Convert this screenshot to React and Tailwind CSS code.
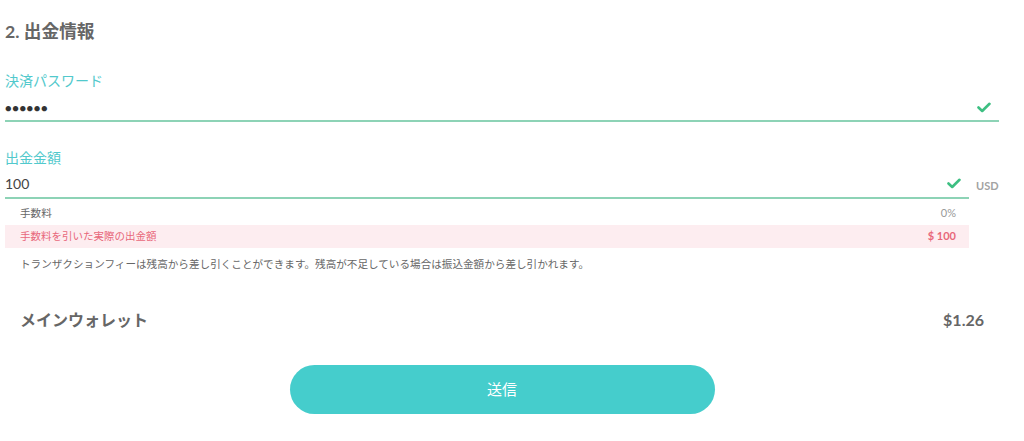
import React from "react";

const Check = () => (
  <svg width="14" height="11" viewBox="0 0 14 11" fill="none">
    <path d="M1.5 5.5 L5.2 9 L12.5 1.8" stroke="#3dbf82" strokeWidth="2.6" strokeLinecap="round" strokeLinejoin="round" />
  </svg>
);

export default function App() {
  return (
    <div className="w-[1024px] h-[441px] bg-white px-[5px] overflow-hidden" style={{ fontFamily: "Lato, 'Noto Sans CJK JP', sans-serif" }}>
      <div className="w-[994px]">
        <h2 className="pt-[20px] text-[17.7px] leading-[24px] font-bold text-[#666666]">2. 出金情報</h2>

        <div className="mt-[27px] text-[14px] leading-[20px] text-[#52c9cc]">決済パスワード</div>
        <div className="h-[31px] flex items-center justify-between border-b-2 border-[#8dd3b6] pt-[3px] pr-[8px]">
          <span className="text-[11px] tracking-[0.6px] text-[#333] leading-none">●●●●●●</span>
          <Check />
        </div>

        <div className="mt-[26px] text-[14px] leading-[20px] text-[#52c9cc]">出金金額</div>
        <div className="flex items-start">
          <div className="w-[964px]">
            <div className="h-[31px] flex items-center justify-between border-b-2 border-[#8dd3b6] pt-[2px] pr-[8px]">
              <span className="text-[14px] text-[#444] leading-none">100</span>
              <Check />
            </div>
            <div className="h-[26px] flex items-center justify-between pt-[3px] pl-[15px] pr-[13px] text-[10.6px] text-[#666]">
              <span>手数料</span>
              <span className="text-[11px] text-[#999]">0%</span>
            </div>
            <div className="h-[23px] flex items-center justify-between bg-[#fdedf0] pl-[15px] pr-[13px] text-[10.5px] text-[#e8677a]">
              <span>手数料を引いた実際の出金額</span>
              <span className="text-[11px] font-bold">$ 100</span>
            </div>
          </div>
          <span className="ml-[7px] mt-[10px] text-[11px] font-bold text-[#a3a3a3]">USD</span>
        </div>
        <div className="mt-[9px] pl-[15px] text-[10.6px] leading-[14px] text-[#666]">
          トランザクションフィーは残高から差し引くことができます。残高が不足している場合は振込金額から差し引かれます。
        </div>

        <div className="mt-[38px] px-[15px] flex items-center justify-between text-[#666] font-bold">
          <span className="text-[16px] leading-[22px]">メインウォレット</span>
          <span className="text-[16px] leading-[22px]">$1.26</span>
        </div>

        <div className="mt-[34px] mx-auto w-[425px] h-[49px] rounded-full bg-[#45cdcc] flex items-center justify-center text-white text-[15px]">
          送信
        </div>
      </div>
    </div>
  );
}
